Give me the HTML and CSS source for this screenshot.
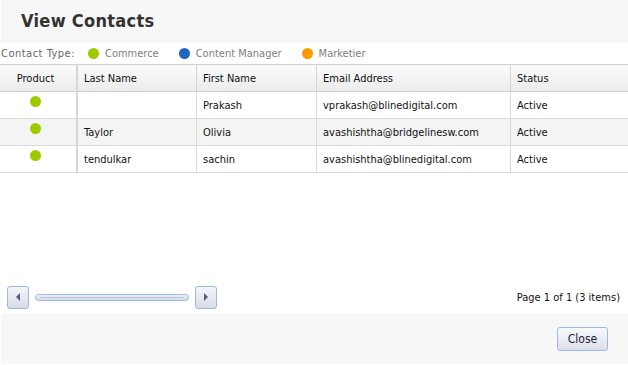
FILE: index.html
```html
<!DOCTYPE html>
<html lang="en">
<head>
  <meta charset="UTF-8">
  <title>View Contacts</title>
  <link rel="stylesheet" href="styles.css">
</head>
<body>
  <div class="dialog">
    <div class="title-bar">View Contacts</div>

    <div class="legend">
      <span class="legend-label">Contact Type:</span>
      <span class="legend-item"><span class="dot green"></span>Commerce</span>
      <span class="legend-item"><span class="dot blue"></span>Content Manager</span>
      <span class="legend-item"><span class="dot orange"></span>Marketier</span>
    </div>

    <div class="grid">
      <table class="contacts">
        <thead>
          <tr>
            <th class="col-product">Product</th>
            <th class="col-last">Last Name</th>
            <th class="col-first">First Name</th>
            <th class="col-email">Email Address</th>
            <th>Status</th>
          </tr>
        </thead>
        <tbody>
          <tr>
            <td class="col-product"><span class="dot green"></span></td>
            <td></td>
            <td>Prakash</td>
            <td>vprakash@blinedigital.com</td>
            <td>Active</td>
          </tr>
          <tr class="alt">
            <td class="col-product"><span class="dot green"></span></td>
            <td>Taylor</td>
            <td>Olivia</td>
            <td>avashishtha@bridgelinesw.com</td>
            <td>Active</td>
          </tr>
          <tr>
            <td class="col-product"><span class="dot green"></span></td>
            <td>tendulkar</td>
            <td>sachin</td>
            <td>avashishtha@blinedigital.com</td>
            <td>Active</td>
          </tr>
        </tbody>
      </table>
    </div>

    <div class="pager">
      <button class="scroll-btn">
        <svg width="6" height="8" viewBox="0 0 6 8"><path d="M5 0 L1 4 L5 8 Z" fill="#4a5f8a"/></svg>
      </button>
      <div class="scroll-track"><div class="scroll-thumb"></div></div>
      <button class="scroll-btn">
        <svg width="6" height="8" viewBox="0 0 6 8"><path d="M1 0 L5 4 L1 8 Z" fill="#4a5f8a"/></svg>
      </button>
      <span class="page-info">Page 1 of 1 (3 items)</span>
    </div>

    <div class="footer">
      <button class="close-btn">Close</button>
    </div>
  </div>
</body>
</html>
```

FILE: styles.css
```css
body {
  margin: 0;
  font-family: "DejaVu Sans Condensed", "DejaVu Sans", Verdana, sans-serif;
  background: white;
  color: #111;
}
.dialog {
  width: 628px;
  height: 365px;
  display: flex;
  flex-direction: column;
}
.title-bar {
  height: 43px;
  margin-left: 1px;
  padding-left: 20px;
  background: #f7f7f7;
  font-size: 18px;
  font-weight: bold;
  color: #333;
  line-height: 42px;
  letter-spacing: 0.3px;
}
.legend {
  height: 21px;
  display: flex;
  align-items: center;
  padding-left: 1px;
  font-size: 11px;
  color: #808080;
}
.legend-label {
  width: 77px;
  color: #666;
  margin-right: 10px;
  letter-spacing: 0.5px;
}
.legend-item {
  display: flex;
  align-items: center;
  margin-right: 20px;
}
.legend-item .dot {
  margin-right: 6px;
}
.dot {
  display: inline-block;
  width: 11px;
  height: 11px;
  border-radius: 50%;
}
.green { background: #9ccc00; }
.blue { background: #1c66bd; }
.orange { background: #ff9a00; }
.grid {
  flex: 1;
}
.contacts {
  width: 100%;
  border-collapse: collapse;
  font-size: 11px;
}
.contacts th {
  height: 26px;
  padding: 0 0 0 6px;
  text-align: left;
  font-weight: normal;
  background: linear-gradient(#fbfbfb, #ebebeb);
  border-top: 1px solid #d3d3d3;
  border-bottom: 1px solid #cfcfcf;
  border-left: 1px solid #d6d6d6;
}
.contacts td {
  height: 26px;
  padding: 0 0 0 6px;
  border-bottom: 1px solid #dadada;
  border-left: 1px solid #dadada;
}
.contacts th:first-child,
.contacts td:first-child {
  border-left: none;
}
.contacts .col-product {
  width: 71px;
  padding: 0 5px 0 0;
  text-align: center;
  border-right: 2px solid #d6d6d6;
}
.contacts td.col-product .dot {
  position: relative;
  top: -2px;
}
.col-last { width: 112px; }
.col-first { width: 113px; }
.col-email { width: 187px; }
.contacts tr.alt td {
  background: #f4f4f4;
}
.pager {
  height: 34px;
  display: flex;
  align-items: center;
  padding: 0 8px 0 7px;
}
.scroll-btn {
  width: 22px;
  height: 23px;
  border: 1px solid #9ab8ea;
  border-radius: 3px;
  background: linear-gradient(#f4f5f8, #d9dce5);
  display: flex;
  align-items: center;
  justify-content: center;
  padding: 0;
}
.scroll-track {
  width: 154px;
  height: 7px;
  margin: 0 6px;
  border: 1px solid #9ab8ea;
  border-radius: 4px;
  background: linear-gradient(#eef1f6, #d5dbe6);
  box-sizing: border-box;
  display: flex;
  align-items: center;
}
.scroll-thumb {
  height: 1px;
  margin: 0 4px;
  flex: 1;
  background: #b8c3d6;
}
.page-info {
  margin-left: auto;
  font-size: 11px;
}
.footer {
  height: 50px;
  margin: 0 0 1px 1px;
  background: #f7f7f7;
  display: flex;
  align-items: center;
  justify-content: flex-end;
  padding-right: 20px;
}
.close-btn {
  width: 51px;
  height: 24px;
  border: 1px solid #9ab8ea;
  border-radius: 3px;
  background: linear-gradient(#f8f9fb, #dde0e8);
  font-family: "DejaVu Sans Condensed", "DejaVu Sans", Verdana, sans-serif;
  font-size: 12px;
  color: #1a2340;
  padding: 0;
}
```
